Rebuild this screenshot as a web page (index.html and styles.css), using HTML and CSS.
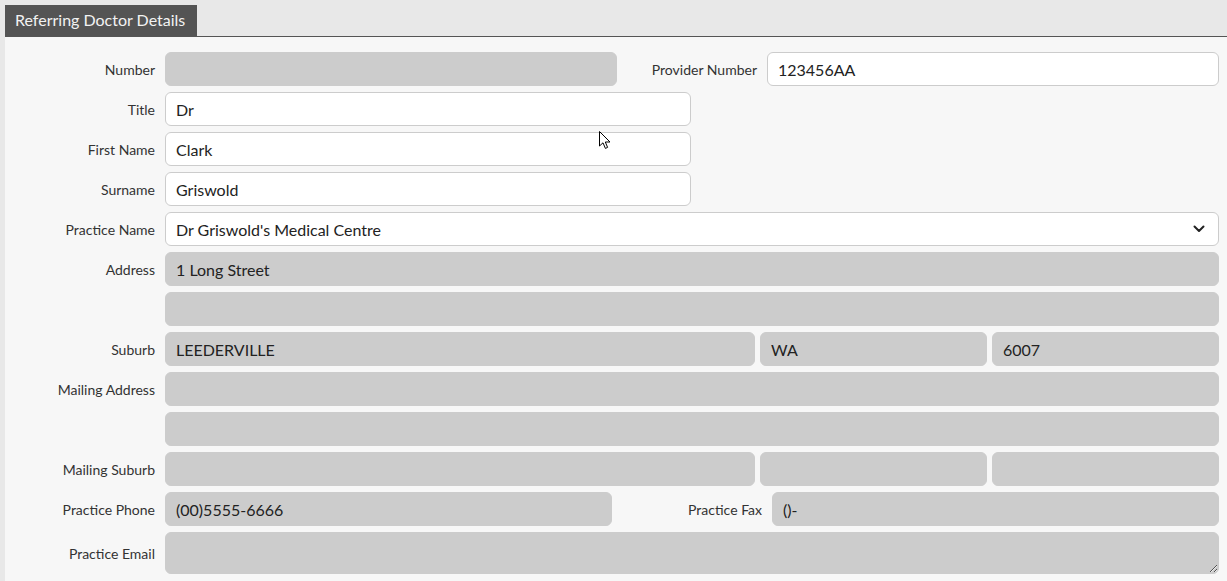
FILE: index.html
```html
<!DOCTYPE html>
<html lang="en">

<head>
    <meta charset="UTF-8">
    <meta name="viewport" content="width=device-width, initial-scale=1.0">
    <title>Referring Doctor Details</title>
    <link rel="stylesheet" href="styles.css">
</head>

<body>
    <div class="panel">
        <div class="tab-bar">
            <div class="tab">Referring Doctor Details</div>
        </div>
        <form class="doctor-form">
            <div class="row">
                <label class="label">Number</label>
                <input class="field readonly grow" type="text" readonly>
                <label class="label mid">Provider Number</label>
                <input class="field grow" type="text" value="123456AA">
            </div>
            <div class="row">
                <label class="label">Title</label>
                <input class="field half" type="text" value="Dr">
            </div>
            <div class="row">
                <label class="label">First Name</label>
                <input class="field half" type="text" value="Clark">
            </div>
            <div class="row">
                <label class="label">Surname</label>
                <input class="field half" type="text" value="Griswold">
            </div>
            <div class="row">
                <label class="label">Practice Name</label>
                <div class="select-wrap grow">
                    <select class="field select">
                        <option>Dr Griswold's Medical Centre</option>
                    </select>
                    <svg class="chevron" width="12" height="8" viewBox="0 0 12 8">
                        <path d="M1.5 1.5 L6 6 L10.5 1.5" fill="none" stroke="#222" stroke-width="2" stroke-linecap="round" stroke-linejoin="round"/>
                    </svg>
                </div>
            </div>
            <div class="row">
                <label class="label">Address</label>
                <input class="field readonly grow" type="text" value="1 Long Street" readonly>
            </div>
            <div class="row">
                <span class="label"></span>
                <input class="field readonly grow" type="text" readonly>
            </div>
            <div class="row tight">
                <label class="label">Suburb</label>
                <input class="field readonly grow" type="text" value="LEEDERVILLE" readonly>
                <input class="field readonly state" type="text" value="WA" readonly>
                <input class="field readonly state" type="text" value="6007" readonly>
            </div>
            <div class="row">
                <label class="label">Mailing Address</label>
                <input class="field readonly grow" type="text" readonly>
            </div>
            <div class="row">
                <span class="label"></span>
                <input class="field readonly grow" type="text" readonly>
            </div>
            <div class="row tight">
                <label class="label">Mailing Suburb</label>
                <input class="field readonly grow" type="text" readonly>
                <input class="field readonly state" type="text" readonly>
                <input class="field readonly state" type="text" readonly>
            </div>
            <div class="row">
                <label class="label">Practice Phone</label>
                <input class="field readonly grow" type="text" value="(00)5555-6666" readonly>
                <label class="label mid wide">Practice Fax</label>
                <input class="field readonly grow" type="text" value="()-" readonly>
            </div>
            <div class="row">
                <label class="label">Practice Email</label>
                <textarea class="field readonly grow email" readonly></textarea>
            </div>
        </form>

        <svg class="cursor" width="12" height="20" viewBox="0 0 12 20">
            <path d="M0.5 0.5 L0.5 15 L4 11.8 L6.4 17.4 L8.6 16.4 L6.3 11 L11 11 Z" fill="#fff" stroke="#000" stroke-width="1" stroke-linejoin="round"/>
        </svg>
    </div>
</body>

</html>
```

FILE: styles.css
```css
* {
    padding: 0;
    margin: 0;
    box-sizing: border-box;
}

body {
    font-family: Lato, "Open Sans", sans-serif;
    background-color: #e8e8e8;
    padding: 5px 0 0 5px;
    height: 100vh;
}

.panel {
    position: relative;
    background-color: #f7f7f7;
    min-height: 100%;
}

.tab-bar {
    background-color: #e8e8e8;
    border-bottom: 1px solid #555;
}

.tab {
    display: inline-block;
    background-color: #545454;
    color: #f2f2f2;
    font-size: 16px;
    height: 31px;
    line-height: 30px;
    padding: 0 10px;
    width: 192px;
}

.doctor-form {
    padding: 15px 8px 10px 0;
    display: flex;
    flex-direction: column;
    gap: 6px;
}

.row {
    display: flex;
    align-items: center;
    gap: 10px;
}

.row.tight {
    gap: 5px;
}

.row.tight .label {
    margin-right: 5px;
}

.label {
    width: 150px;
    flex-shrink: 0;
    text-align: right;
    font-size: 14px;
    color: #333;
}

.label.mid {
    width: 130px;
}

.label.mid.wide {
    width: 140px;
}

.field {
    height: 34px;
    border: 1px solid #ccc;
    border-radius: 6px;
    background-color: #fff;
    padding: 0 10px;
    font-family: Lato, "Open Sans", sans-serif;
    font-size: 16px;
    color: #222;
    outline: none;
}

.field.readonly {
    background-color: #ccc;
    border-color: #ccc;
}

.grow {
    flex: 1;
    min-width: 0;
}

.half {
    width: 526px;
}

.state {
    width: 227px;
}

.select-wrap {
    position: relative;
    display: flex;
}

.select {
    width: 100%;
    appearance: none;
    -webkit-appearance: none;
    padding-right: 30px;
}

.chevron {
    position: absolute;
    right: 14px;
    top: 13px;
    pointer-events: none;
}

.email {
    height: 42px;
    padding-top: 8px;
    resize: vertical;
}

.cursor {
    position: absolute;
    left: 594px;
    top: 126px;
}
```
